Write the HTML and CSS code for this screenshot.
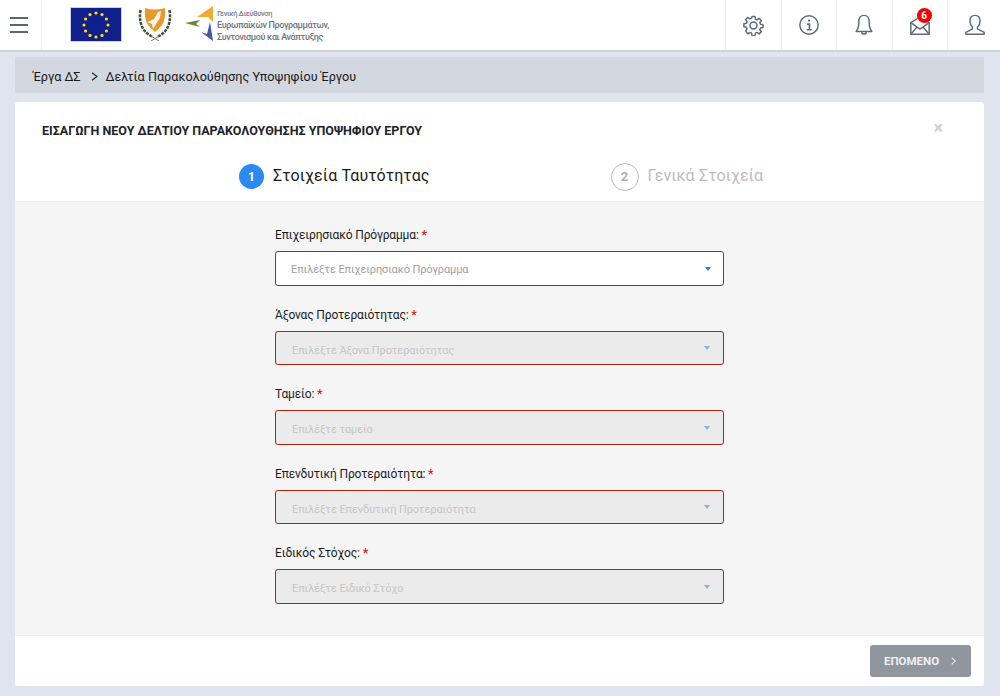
FILE: index.html
```html
<!DOCTYPE html>
<html lang="el">
<head>
<meta charset="utf-8">
<title>Εισαγωγή νέου δελτίου</title>
<link rel="stylesheet" href="styles.css">
</head>
<body>
<header class="topbar">
  <button class="burger" aria-label="menu"><span></span><span></span><span></span></button>
  <div class="logos">
    <svg class="eu" width="52" height="35" viewBox="0 0 52 35">
      <rect x="0.5" y="0.5" width="51" height="34" fill="#0f1f8c" stroke="#c9d0ea"/>
      <g fill="#ffe000">
        <circle cx="26" cy="6" r="1.6"/><circle cx="32" cy="7.6" r="1.6"/><circle cx="36.4" cy="12" r="1.6"/><circle cx="38" cy="18" r="1.6"/><circle cx="36.4" cy="24" r="1.6"/><circle cx="32" cy="28.4" r="1.6"/><circle cx="26" cy="30" r="1.6"/><circle cx="20" cy="28.4" r="1.6"/><circle cx="15.6" cy="24" r="1.6"/><circle cx="14" cy="18" r="1.6"/><circle cx="15.6" cy="12" r="1.6"/><circle cx="20" cy="7.6" r="1.6"/>
      </g>
    </svg>
    <svg class="coat" width="34" height="34" viewBox="0 0 34 34">
      <path d="M7 1 Q17 4 27 1 Q28 12 24 18 Q21 22 17 25 Q13 22 10 18 Q6 12 7 1Z" fill="#e59a2c"/>
      <path d="M9.500 15 L16 12 L20 5 L23 4 L22 11 L18 17 L15 22 L14 17Z" fill="#f8f3e6"/>
      <path d="M2.500 3 Q0.500 15 6 23 Q10 28 15 30 M31.500 3 Q33.500 15 28 23 Q24 28 19 30" fill="none" stroke="#47533a" stroke-width="2.600" stroke-dasharray="3 1"/>
      <path d="M13 29 L21 34 M21 29 L13 34" stroke="#6f7468" stroke-width="1"/>
    </svg>
    <div class="dept">
      <svg width="29" height="36" viewBox="0 0 29 36">
        <path d="M0 17 L15 14 L11 18 L15 21Z" fill="#74802f"/>
        <path d="M12 11 L28 0 L28 16 L23 11Z" fill="#f0ab32"/>
        <path d="M16 26 L22 28 L25 16 L28 35Z" fill="#3f5ba8"/>
      </svg>
      <div class="dept-text">
        <span class="dept-small">Γενική Διεύθυνση</span>
        <span class="dept-big">Ευρωπαϊκών Προγραμμάτων,</span>
        <span class="dept-big">Συντονισμού και Ανάπτυξης</span>
      </div>
    </div>
  </div>
  <nav class="tools">
    <a class="tool" aria-label="ρυθμίσεις">
      <svg width="21" height="21" viewBox="0 0 24 24" fill="none" stroke="#5f6b78" stroke-width="1.700" stroke-linejoin="round"><path d="M10.300 2h3.400l.5 2.900 1.900.8 2.400-1.700 2.400 2.400-1.700 2.400.8 1.900 2.900.5v3.400l-2.900.5-.8 1.900 1.700 2.400-2.400 2.400-2.400-1.700-1.900.8-.5 2.900h-3.400l-.5-2.900-1.900-.8-2.400 1.700L3 18.400l1.700-2.400-.8-1.900L1 13.600v-3.400l2.900-.5.8-1.900L3 5.400 5.400 3l2.400 1.700 1.900-.8z" transform="translate(0 -.2)"/><circle cx="12" cy="12" r="4"/></svg>
    </a>
    <a class="tool" aria-label="πληροφορίες">
      <svg width="22" height="22" viewBox="0 0 24 24" fill="none" stroke="#5f6b78" stroke-width="1.600"><circle cx="12" cy="12" r="10"/><circle cx="12" cy="7.200" r="1.200" fill="#5f6b78" stroke="none"/><path d="M10 11h2.500v6M9.500 17.200h5.500" stroke-width="1.800"/></svg>
    </a>
    <a class="tool" aria-label="ειδοποιήσεις">
      <svg width="22" height="22" viewBox="0 0 24 24" fill="none" stroke="#5f6b78" stroke-width="1.600" stroke-linejoin="round"><path d="M12 1.500c-4 0-5.600 3-5.600 6.500 0 6-.9 9-3 11h17.200c-2.100-2-3-5-3-11 0-3.500-1.600-6.500-5.600-6.500z"/><path d="M9.500 19.500c0 3.200 5 3.200 5 0"/></svg>
    </a>
    <a class="tool" aria-label="μηνύματα">
      <svg width="22" height="22" viewBox="0 0 24 24" fill="none" stroke="#5f6b78" stroke-width="1.600" stroke-linejoin="round"><path d="M2 9.500 12 3l10 6.500V22H2z"/><path d="M2 9.500l10 7 10-7M2 22l7-8M22 22l-7-8"/></svg>
      <span class="badge">6</span>
    </a>
    <a class="tool" aria-label="χρήστης">
      <svg width="22" height="22" viewBox="0 0 24 24" fill="none" stroke="#5f6b78" stroke-width="1.600" stroke-linejoin="round"><path d="M12 1.500c-3.800 0-5.500 2.800-5.500 6 0 3 1.200 5.300 2.800 6.700v2L2 20v2h20v-2l-7.300-3.800v-2c1.600-1.400 2.800-3.700 2.800-6.700 0-3.200-1.700-6-5.500-6z"/></svg>
    </a>
  </nav>
</header>

<div class="crumbs">
  <span>Έργα ΔΣ</span>
  <svg class="crumb-sep" width="7" height="9" viewBox="0 0 7 9" fill="none" stroke="#222" stroke-width="1.100"><path d="M1 .8 6 4.500 1 8.200"/></svg>
  <span>Δελτία Παρακολούθησης Υποψηφίου Έργου</span>
</div>

<main class="card">
  <div class="card-head">
    <div class="title-row">
      <h1 class="title">ΕΙΣΑΓΩΓΗ ΝΕΟΥ ΔΕΛΤΙΟΥ ΠΑΡΑΚΟΛΟΥΘΗΣΗΣ ΥΠΟΨΗΦΙΟΥ ΕΡΓΟΥ</h1>
      <span class="close">×</span>
    </div>
    <div class="steps">
      <div class="step active"><span class="num">1</span><span class="step-label">Στοιχεία Ταυτότητας</span></div>
      <div class="step todo"><span class="num">2</span><span class="step-label">Γενικά Στοιχεία</span></div>
    </div>
  </div>
  <form class="card-body">
    <div class="field">
      <label class="label">Επιχειρησιακό Πρόγραμμα: <em>*</em></label>
      <div class="select"><span>Επιλέξτε Επιχειρησιακό Πρόγραμμα</span><i class="caret"></i></div>
    </div>
    <div class="field">
      <label class="label">Άξονας Προτεραιότητας: <em>*</em></label>
      <div class="select off"><span>Επιλέξτε Άξονα Προτεραιότητας</span><i class="caret"></i></div>
    </div>
    <div class="field">
      <label class="label">Ταμείο: <em>*</em></label>
      <div class="select off"><span>Επιλέξτε ταμείο</span><i class="caret"></i></div>
    </div>
    <div class="field">
      <label class="label">Επενδυτική Προτεραιότητα: <em>*</em></label>
      <div class="select off"><span>Επιλέξτε Επενδυτική Προτεραιότητα</span><i class="caret"></i></div>
    </div>
    <div class="field">
      <label class="label">Ειδικός Στόχος: <em>*</em></label>
      <div class="select off"><span>Επιλέξτε Ειδικό Στόχο</span><i class="caret"></i></div>
    </div>
  </form>
  <footer class="card-foot">
    <button class="next" type="button">ΕΠΟΜΕΝΟ
      <svg width="5" height="8" viewBox="0 0 5 8" fill="none" stroke="#e8ebee" stroke-width="1.100"><path d="M.7.6 4.300 4 .7 7.400"/></svg>
    </button>
  </footer>
</main>
</body>
</html>
```
FILE: styles.css
```css
* { box-sizing: border-box; }
html, body { height: 100%; }
body {
  margin: 0;
  height: 696px;
  overflow: hidden;
  background: #e0e4ee;
  font-family: Roboto, "Liberation Sans", sans-serif;
  color: #1c1c1c;
  display: flex;
  flex-direction: column;
}

/* top bar */
.topbar {
  height: 52px;
  flex: none;
  display: flex;
  align-items: stretch;
  background: #fff;
  border-bottom: 2px solid #cfd2d9;
}
.burger {
  width: 42px;
  padding: 0 0 1px 10px;
  border: 0;
  border-right: 1px solid #eceef0;
  background: none;
  display: flex;
  flex-direction: column;
  align-items: flex-start;
  justify-content: center;
  gap: 5px;
}
.burger span { display: block; width: 18px; height: 2px; background: #5d6670; }
.logos { display: flex; align-items: center; padding: 0 0 2px 28px; flex: 1; }
.eu { flex: none; }
.coat { margin-left: 16px; flex: none; }
.dept { display: flex; align-items: center; margin-left: 13px; gap: 3px; }
.dept-text { display: flex; flex-direction: column; color: #6d7480; padding-top: 3px; }
.dept-small { font-size: 7.500px; line-height: 10px; margin-top: 1px; color: #7c828c; font-weight: 500; letter-spacing: -0.350px; }
.dept-big { font-size: 9px; line-height: 12px; font-weight: 500; letter-spacing: -0.350px; }
.tools { display: flex; height: 50px; margin-right: -2.500px; }
.tool {
  position: relative;
  width: 55.500px;
  display: flex;
  align-items: center;
  justify-content: center;
  border-left: 1px solid #eceef0;
}
.badge {
  position: absolute;
  top: 8px;
  left: 24px;
  width: 15px;
  height: 15px;
  border-radius: 50%;
  background: #f40000;
  color: #fff;
  font-size: 10px;
  font-weight: 700;
  line-height: 15px;
  text-align: center;
}

/* breadcrumb */
.crumbs {
  height: 36px;
  flex: none;
  margin: 5px 16px 9px 15px;
  padding: 2px 0 0 18px;
  background: #d3d7e0;
  display: flex;
  align-items: center;
  font-size: 12.650px;
  color: #1a1a1a;
}
.crumb-sep { margin: 0 8px 0 10px; }

/* card */
.card {
  flex: none;
  height: 584px;
  margin: 0 16px 0 15px;
  background: #fff;
  border-radius: 3px;
  display: flex;
  flex-direction: column;
}
.card-head { height: 100px; flex: none; border-bottom: 1px solid #ebebeb; padding: 0 27px; }
.title-row { display: flex; justify-content: space-between; align-items: flex-start; height: 52px; }
.title { margin: 21px 0 0; font-size: 12.500px; line-height: 15px; font-weight: 700; color: #20232a; }
.close { margin: 16px 14px 0 0; font-size: 18px; line-height: 20px; font-weight: 700; color: #d0d0d0; }
.steps { display: flex; height: 46px; margin-left: 197px; }
.step { display: flex; align-items: center; height: 29px; margin-top: 8px; }
.step .num {
  width: 25px; height: 25px;
  border-radius: 50%;
  display: flex; align-items: center; justify-content: center;
  font-size: 12px; font-weight: 700;
}
.step-label { margin-left: 9px; padding-bottom: 2px; font-size: 16px; letter-spacing: 0.120px; }
.active .num { background: #2a8af0; color: #fff; }
.active .step-label { color: #1c1c1c; }
.todo { margin-left: 181px; }
.todo .num { width: 28px; height: 28px; border: 1px solid #bcbcbc; color: #b0b0b0; font-size: 13px; }
.todo .step-label { color: #bdbdbd; font-weight: 400; }

.card-body {
  flex: 1;
  background: #f5f5f5;
  padding: 24px 0 0 260px;
}
.field { width: 449px; height: 79.500px; }
.label { display: block; font-size: 12px; line-height: 19px; color: #1c1c1c; letter-spacing: -0.150px; }
.label em { font-style: normal; font-weight: 700; color: #d9231f; }
.select {
  height: 35px;
  margin-top: 6px;
  border: 1px solid #ab2410;
  border-radius: 3px;
  background: #fff;
  display: flex;
  align-items: center;
  justify-content: space-between;
  padding: 0 12px 0 15px;
  font-size: 11px;
  letter-spacing: -0.100px;
  color: #a0a0a0;
}
.select span { padding-top: 1px; }
.select.off { height: 34.500px; background: #ebebeb; color: #c6c6c6; }
.select.off span { margin-left: 1px; padding-top: 5px; }
.caret { width: 0; height: 0; border: 3.500px solid transparent; border-top: 4px solid #2384cc; border-bottom: 0; margin-top: 1px; }
.off .caret { border-top-color: #7cb8e4; margin-right: 1px; }

.card-foot {
  height: 51px;
  flex: none;
  border-top: 1px solid #ebebeb;
  display: flex;
  align-items: flex-start;
  justify-content: flex-end;
  padding: 9px 13px 0 0;
}
.next {
  width: 101px;
  height: 32px;
  border: 0;
  border-radius: 3px;
  background: #8f969d;
  color: #eef0f2;
  font-family: inherit;
  font-size: 11.500px;
  font-weight: 700;
  display: flex;
  align-items: center;
  justify-content: flex-start;
  gap: 12px;
  padding: 0 0 0 14px;
}
```
